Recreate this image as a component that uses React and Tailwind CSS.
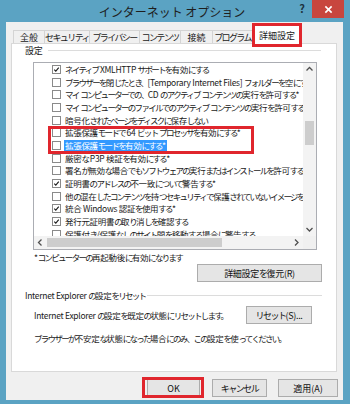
import React from "react";

const KANA = /([\u3000-\u30ff\uff01-\uff9f]+)/;

function T({ s, k = "tracking-[-1.7px]" }) {
  return s.split(KANA).map((p, i) =>
    i % 2 ? (
      <span key={i} className={k}>
        {p}
      </span>
    ) : (
      <React.Fragment key={i}>{p}</React.Fragment>
    )
  );
}

function Check({ checked }) {
  return (
    <span className="w-[9px] h-[9px] border border-[#8a8a8a] bg-white flex items-center justify-center shrink-0">
      {checked && (
        <svg viewBox="0 0 9 9" className="w-[9px] h-[9px]">
          <path d="M1.6 4.6 L3.6 6.6 L7.4 2" stroke="#1a1a1a" strokeWidth="1.4" fill="none" />
        </svg>
      )}
    </span>
  );
}

const rows = [
  [true, "ネイティブ XMLHTTP サポートを有効にする"],
  [false, "ブラウザーを閉じたとき、[Temporary Internet Files] フォルダーを空にする"],
  [false, "マイ コンピューターでの、CD のアクティブ コンテンツの実行を許可する*"],
  [false, "マイ コンピューターのファイルでのアクティブ コンテンツの実行を許可する*"],
  [false, "暗号化されたページをディスクに保存しない"],
  [false, "拡張保護モードで 64 ビット プロセッサを有効にする*"],
  [false, "拡張保護モードを有効にする*", true],
  [false, "厳密な P3P 検証を有効にする*"],
  [false, "署名が無効な場合でもソフトウェアの実行またはインストールを許可する"],
  [true, "証明書のアドレスの不一致について警告する*"],
  [false, "他の混在したコンテンツを持つセキュリティで保護されていないイメージをブロックする"],
  [true, "統合 Windows 認証を使用する*"],
  [true, "発行元証明書の取り消しを確認する"],
  [false, "保護付き/保護なしのサイト間を移動する場合に警告する"],
];

function Chevron({ dir }) {
  const d = {
    up: "M1.5 5.5 L4.5 2.5 L7.5 5.5",
    down: "M1.5 3 L4.5 6 L7.5 3",
    left: "M5.5 1.5 L2.5 4.5 L5.5 7.5",
    right: "M3 1.5 L6 4.5 L3 7.5",
  }[dir];
  return (
    <svg viewBox="0 0 9 9" className="w-[9px] h-[9px]">
      <path d={d} stroke="#505050" strokeWidth="1.3" fill="none" />
    </svg>
  );
}

function Btn({ children, w, className = "" }) {
  return (
    <div
      className={`h-[18px] border border-[#acacac] bg-[#e5e5e5] flex items-center justify-center text-[9px] leading-none text-[#111] whitespace-nowrap ${w} ${className}`}
    >
      <T s={children} k="tracking-[-1.5px]" />
    </div>
  );
}

const tabs = [
  ["全般", "w-[32px] border-l"],
  ["セキュリティ", "w-[45px]"],
  ["プライバシー", "w-[50px]"],
  ["コンテンツ", "w-[41px]"],
  ["接続", "w-[32px]"],
  ["プログラム", "w-[40px]"],
];

export default function App() {
  return (
    <div className="w-[350px] h-[404px] bg-[#5ba3c3] flex flex-col [font-family:'Noto_Sans_CJK_JP',sans-serif] text-[#1a1a1a] overflow-hidden">
      {/* title bar */}
      <div className="h-[22px] flex items-start shrink-0">
        <div className="flex-1" />
        <div className="text-[12px] leading-[24px] text-[#1e1e1e] whitespace-nowrap">インターネット オプション</div>
        <div className="flex-1 flex justify-end items-start pr-[6px]">
          <span className="text-[11px] font-bold leading-[17px] mr-[7px] text-[#1d3340]">?</span>
          <div className="w-[32px] h-[18px] bg-[#c8463e] flex items-center justify-center">
            <svg viewBox="0 0 10 10" className="w-[9px] h-[9px]">
              <path d="M1.5 1.5 L8.5 8.5 M8.5 1.5 L1.5 8.5" stroke="#fff" strokeWidth="1.8" />
            </svg>
          </div>
        </div>
      </div>

      {/* client area */}
      <div className="flex-1 bg-[#f0f0f0] ml-[6px] mr-[7px] mb-[4px] flex flex-col">
        {/* tabs */}
        <div className="mt-[8px] h-[13px] flex items-end pl-[7px] relative z-10">
          {tabs.map(([t, c]) => (
            <div
              key={t}
              className={`h-[13px] border-t border-r border-[#d4d4d4] bg-[#f0f0f0] flex items-center justify-center text-[9px] leading-none whitespace-nowrap ${c}`}
            >
              <T s={t} k="tracking-[-1.6px]" />
            </div>
          ))}
          <div className="w-[50px] h-[24px] -ml-[1px] -mb-[4px] border-[3px] border-[#e0262d] bg-white flex items-center justify-center text-[9px] leading-none whitespace-nowrap">
            詳細設定
          </div>
        </div>

        {/* panel */}
        <div className="ml-[5px] w-[326px] h-[329px] bg-white border border-[#d9d9d9] flex flex-col text-[8.5px] tracking-[-0.3px]">
          {/* group header */}
          <div className="h-[12px] flex items-center ml-[13px] mr-[15px]">
            <span className="text-[9px] leading-none">設定</span>
            <div className="flex-1 h-px bg-[#dcdcdc] ml-[6px]" />
          </div>

          {/* list box */}
          <div className="mt-[6px] ml-[21px] w-[284px] h-[188px] border border-[#abadb3] bg-white flex flex-col relative">
            <div className="flex flex-1 min-h-0">
              <div className="flex-1 overflow-hidden">
                {rows.map(([c, t, sel], i) => (
                  <div key={i} className="h-[12.7px] flex items-center pl-[18px] whitespace-nowrap">
                    <Check checked={c} />
                    <span
                      className={`ml-[3px] px-[1px] leading-[11px] ${sel ? "bg-[#3399ff] text-white" : ""}`}
                    >
                      <T s={t} />
                    </span>
                  </div>
                ))}
              </div>
              {/* vertical scrollbar */}
              <div className="w-[13px] bg-[#f3f3f3] flex flex-col items-center">
                <div className="h-[13px] flex items-center justify-center">
                  <Chevron dir="up" />
                </div>
                <div className="flex-1 w-full flex flex-col items-center">
                  <div className="mt-[45px] w-[9px] h-[24px] bg-[#cdcdcd]" />
                  <div className="flex-1" />
                </div>
                <div className="h-[13px] flex items-center justify-center">
                  <Chevron dir="down" />
                </div>
              </div>
            </div>
            {/* horizontal scrollbar */}
            <div className="h-[13px] flex bg-[#f3f3f3]">
              <div className="w-[13px] flex items-center justify-center">
                <Chevron dir="left" />
              </div>
              <div className="flex-1 flex items-center">
                <div className="w-[175px] h-[9px] bg-[#cdcdcd]" />
              </div>
              <div className="w-[13px] flex items-center justify-center">
                <Chevron dir="right" />
              </div>
              <div className="w-[13px] bg-[#f0f0f0]" />
            </div>
            {/* highlight box */}
            <div className="absolute left-[14px] top-[63px] w-[206px] h-[28px] border-[3px] border-[#e0262d]" />
          </div>

          <div className="ml-[22px] mt-px h-[12px] flex items-center leading-none whitespace-nowrap">
            <T s="*コンピューターの再起動後に有効になります" />
          </div>

          <div className="mt-px flex justify-end mr-[14px]">
            <Btn w="w-[125px]">詳細設定を復元(R)</Btn>
          </div>

          <div className="mt-[7px] h-[12px] flex items-center ml-[13px] mr-[14px]">
            <span className="leading-none whitespace-nowrap">
              <T s="Internet Explorer の設定をリセット" />
            </span>
            <div className="flex-1 h-px bg-[#dcdcdc] ml-[2px]" />
          </div>

          <div className="mt-[5px] h-[18px] flex items-center ml-[22px] mr-[24px]">
            <span className="leading-none whitespace-nowrap">
              <T s="Internet Explorer の設定を既定の状態にリセットします。" />
            </span>
            <div className="flex-1" />
            <Btn w="w-[66px]">リセット(S)...</Btn>
          </div>

          <div className="mt-[8px] ml-[22px] h-[12px] flex items-center leading-none whitespace-nowrap">
            <T s="ブラウザーが不安定な状態になった場合にのみ、この設定を使ってください。" />
          </div>
        </div>

        {/* bottom buttons */}
        <div className="mt-[7px] flex justify-end pr-[5px]">
          <div className="relative">
            <Btn w="w-[53px]" className="h-[17px]">OK</Btn>
            <div className="absolute -left-[5px] -right-[4px] -top-[2px] -bottom-[1px] border-[3px] border-[#e0262d]" />
          </div>
          <Btn w="w-[55px]" className="ml-[12px] h-[17px]">キャンセル</Btn>
          <Btn w="w-[60px]" className="ml-[11px] h-[17px]">適用(A)</Btn>
        </div>
      </div>
    </div>
  );
}
